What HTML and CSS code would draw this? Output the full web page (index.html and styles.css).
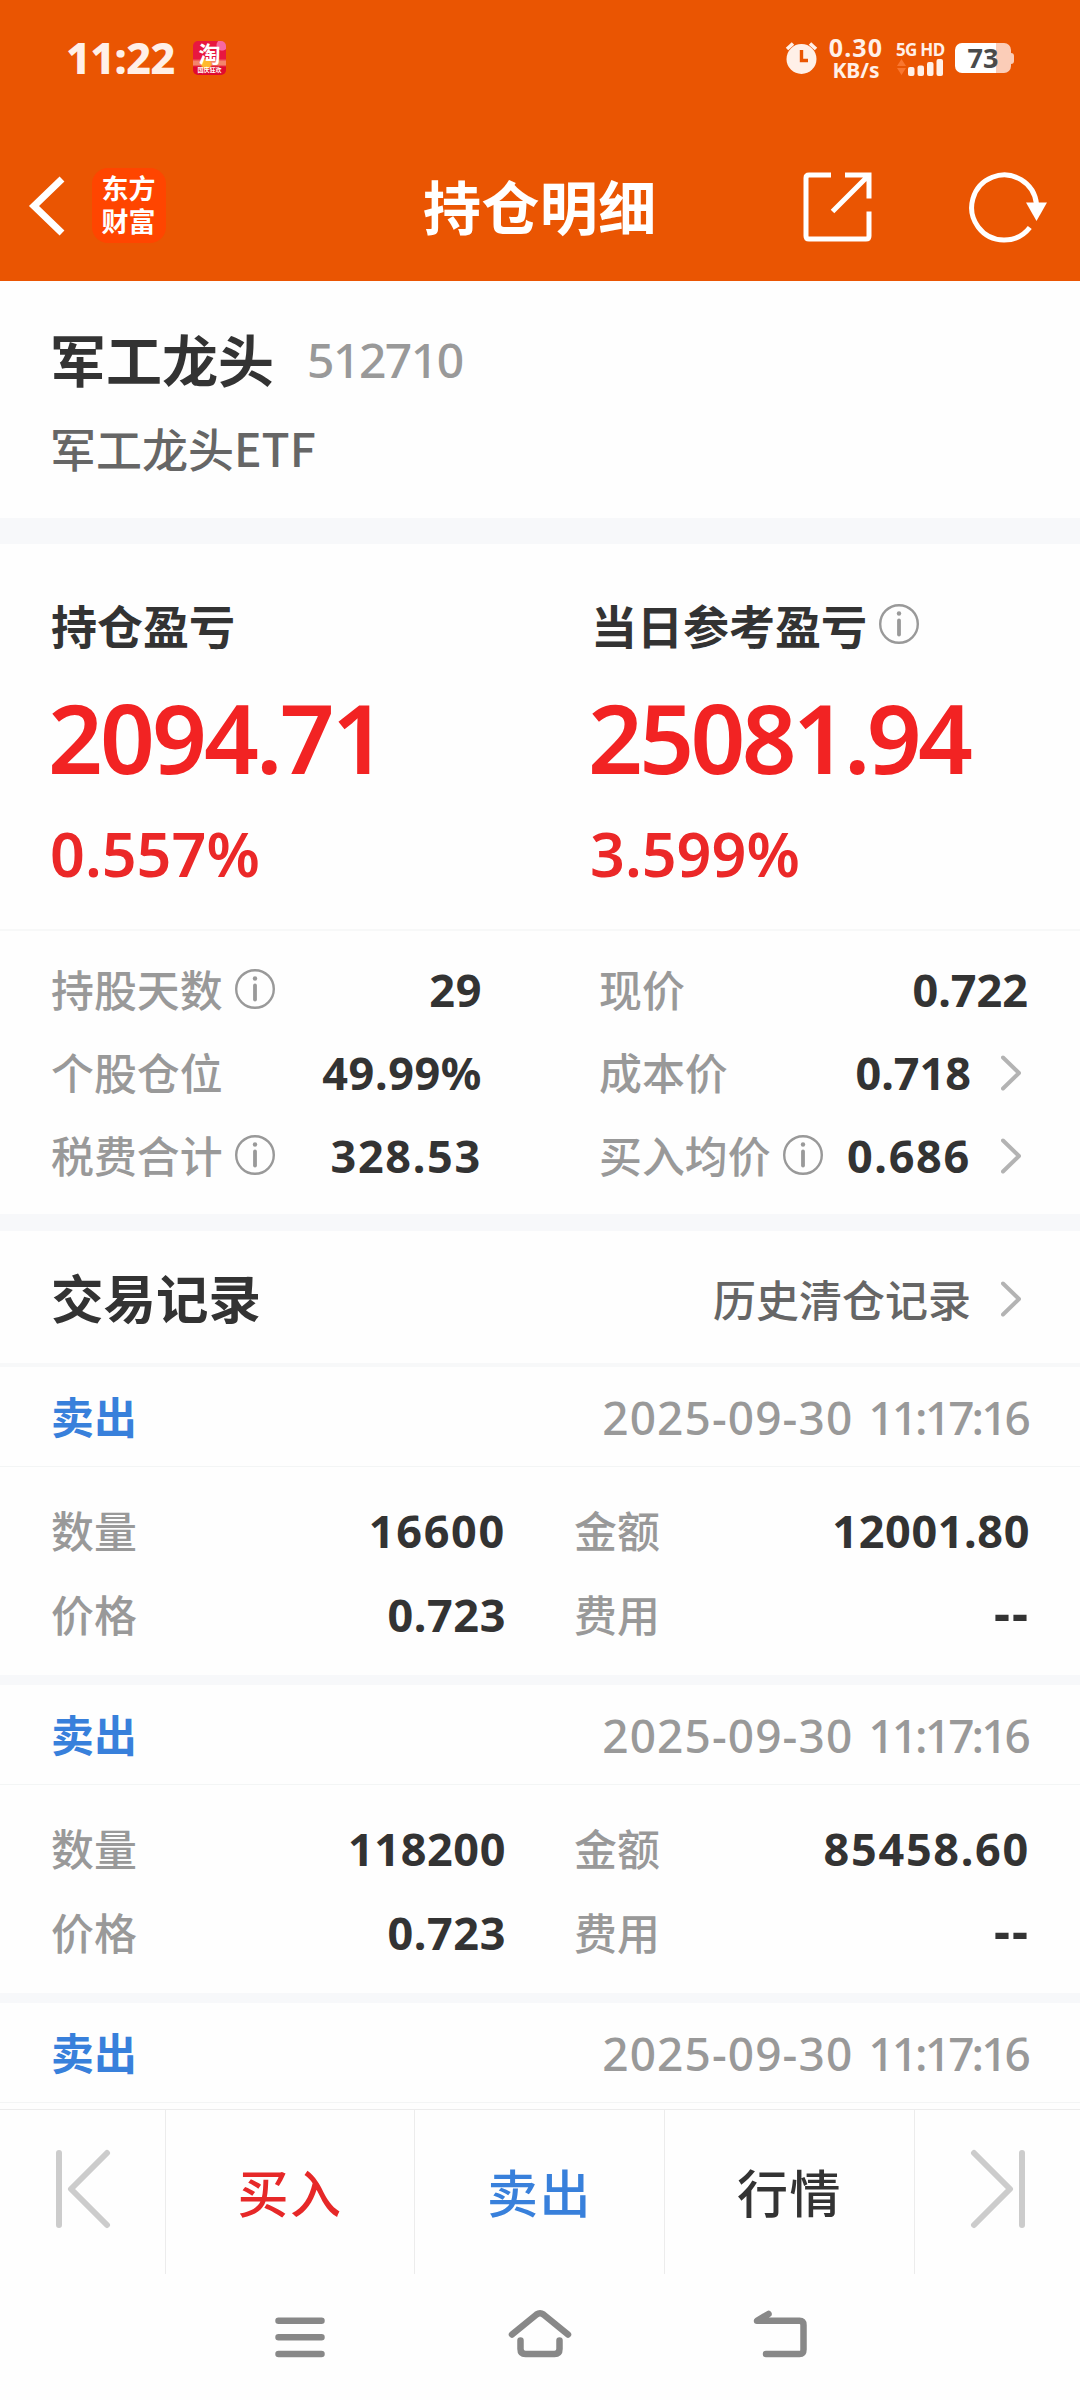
FILE: index.html
```html
<!DOCTYPE html>
<html lang="zh-CN">
<head>
<meta charset="utf-8">
<title>持仓明细</title>
<link rel="stylesheet" href="styles.css">
</head>
<body>
<svg class="defs" width="0" height="0" aria-hidden="true">
  <symbol id="info" viewBox="0 0 40 40"><circle cx="20" cy="20" r="18.8" fill="none" stroke="#999" stroke-width="2.4"/><circle cx="20" cy="9.5" r="2.2" fill="#999"/><path d="M20 16.5V30.5" stroke="#999" stroke-width="3.8" stroke-linecap="round"/></symbol>
  <symbol id="more" viewBox="0 0 20 36"><path d="M2 2.5L18 18L2 33.5" fill="none" stroke="#b3b3b3" stroke-width="4" stroke-linecap="round" stroke-linejoin="round"/></symbol>
</svg>
<div class="screen">
  <header class="header">
    <div class="status">
      <span class="clock">11:22</span>
      <span class="shop"><span class="shop-name">淘</span><span class="shop-tag">国庆狂欢</span></span>
      <svg class="alarm" width="34" height="34" viewBox="0 0 34 34"><circle cx="16.5" cy="18" r="15" fill="#fff0e8"/><path d="M2 8L8 2.5M25 2.5L31 8" stroke="#fff0e8" stroke-width="3.6"/><path d="M16.5 9V19.500H23" fill="none" stroke="#ea5502" stroke-width="3.4"/></svg>
      <div class="speed"><span class="rate">0.30</span><span class="unit">KB/s</span></div>
      <div class="net"><span class="net-type">5G HD</span>
        <svg width="48" height="18" viewBox="0 0 48 18"><path d="M1 8L5.500 1L10 8ZM1 10H10L5.500 17Z" fill="#f9762f"/><g fill="#fff0e8"><rect x="12" y="9" width="6.500" height="9" rx="2"/><rect x="21.500" y="7.500" width="6.500" height="10.500" rx="2"/><rect x="31" y="4" width="6.500" height="14" rx="2"/><rect x="40.500" y="1" width="6.500" height="17" rx="2"/></g></svg>
      </div>
      <div class="battery"><span class="cell">73</span><i class="nub"></i></div>
    </div>
    <div class="nav">
      <svg class="back" width="40" height="64" viewBox="0 0 40 64"><path d="M34 5L6 32L34 59" fill="none" stroke="#fff" stroke-width="7"/></svg>
      <span class="logo"><span>东方</span><span>财富</span></span>
      <h1 class="title">持仓明细</h1>
      <svg class="share" width="70" height="70" viewBox="0 0 70 70"><path d="M28 3H6Q3 3 3 6V64Q3 67 6 67H63Q66 67 66 64V39.500M42 3H66V26.500M64 5L29.500 39.500" fill="none" stroke="#fff" stroke-width="5"/></svg>
      <svg class="reload" width="80" height="74" viewBox="0 0 80 74"><path d="M60.800 58.500A32.500 32.500 0 1 1 67.500 35" fill="none" stroke="#fff" stroke-width="5"/><path d="M57 33.500H78L67.500 52Z" fill="#fff"/></svg>
    </div>
  </header>

  <section class="stock">
    <div class="stock-head"><h2 class="stock-name">军工龙头</h2><span class="stock-code">512710</span></div>
    <div class="stock-full">军工龙头ETF</div>
  </section>

  <section class="profit">
    <div class="profit-col">
      <h3 class="profit-title">持仓盈亏</h3>
      <div class="amount amount-short">2094.71</div>
      <div class="percent">0.557%</div>
    </div>
    <div class="profit-col">
      <h3 class="profit-title">当日参考盈亏<svg class="info" width="40" height="40"><use href="#info"/></svg></h3>
      <div class="amount">25081.94</div>
      <div class="percent">3.599%</div>
    </div>
  </section>

  <section class="stats">
    <div class="stats-col">
      <div class="stat"><span class="label">持股天数</span><svg class="info" width="40" height="40"><use href="#info"/></svg><span class="value">29</span></div>
      <div class="stat"><span class="label">个股仓位</span><span class="value">49.99%</span></div>
      <div class="stat"><span class="label">税费合计</span><svg class="info" width="40" height="40"><use href="#info"/></svg><span class="value wide">328.53</span></div>
    </div>
    <div class="stats-col">
      <div class="stat"><span class="label">现价</span><span class="value narrow">0.722</span></div>
      <div class="stat linked"><span class="label">成本价</span><span class="value narrow">0.718</span><svg class="more" width="20" height="36"><use href="#more"/></svg></div>
      <div class="stat linked"><span class="label">买入均价</span><svg class="info" width="40" height="40"><use href="#info"/></svg><span class="value wide">0.686</span><svg class="more" width="20" height="36"><use href="#more"/></svg></div>
    </div>
  </section>

  <section class="records">
    <div class="records-head"><h2 class="records-title">交易记录</h2><span class="history">历史清仓记录</span><svg class="more" width="20" height="36"><use href="#more"/></svg></div>
    <article class="record">
      <div class="record-head"><span class="side">卖出</span><time class="when"><span class="date">2025-09-30</span><span class="time">11:17:16</span></time></div>
      <div class="record-body">
        <span class="label">数量</span><span class="value wide">16600</span><span class="label second">金额</span><span class="value">12001.80</span>
        <span class="label">价格</span><span class="value">0.723</span><span class="label second">费用</span><span class="value dashes">--</span>
      </div>
    </article>
    <article class="record">
      <div class="record-head"><span class="side">卖出</span><time class="when"><span class="date">2025-09-30</span><span class="time">11:17:16</span></time></div>
      <div class="record-body">
        <span class="label">数量</span><span class="value">118200</span><span class="label second">金额</span><span class="value wide">85458.60</span>
        <span class="label">价格</span><span class="value">0.723</span><span class="label second">费用</span><span class="value dashes">--</span>
      </div>
    </article>
    <article class="record">
      <div class="record-head"><span class="side">卖出</span><time class="when"><span class="date">2025-09-30</span><span class="time">11:17:16</span></time></div>
    </article>
  </section>

  <footer class="actions">
    <span class="action step"><svg width="56" height="80" viewBox="0 0 56 80"><path d="M4 4V76M52 4L16 40L52 76" fill="none" stroke="#ccc" stroke-width="6" stroke-linecap="round" stroke-linejoin="round"/></svg></span>
    <span class="action buy">买入</span>
    <span class="action sell">卖出</span>
    <span class="action">行情</span>
    <span class="action step"><svg width="56" height="80" viewBox="0 0 56 80"><path d="M52 4V76M4 4L40 40L4 76" fill="none" stroke="#ccc" stroke-width="6" stroke-linecap="round" stroke-linejoin="round"/></svg></span>
  </footer>
  <nav class="system">
    <svg width="60" height="56" viewBox="0 0 60 56"><path d="M8.500 14.700H51.500M8.500 31.300H51.500M8.500 48H51.500" stroke="#888" stroke-width="6.500" stroke-linecap="round"/></svg>
    <svg width="70" height="56" viewBox="0 0 70 56"><path d="M7 28.500L31.500 8.500Q35 6 38.500 8.500L63 28.500M15.500 34.500V43Q15.500 48 20.500 48H49.500Q54.500 48 54.500 43V34.500" fill="none" stroke="#888" stroke-width="6.500" stroke-linecap="round"/></svg>
    <svg width="60" height="56" viewBox="0 0 60 56"><path d="M16 48H49.500Q53.500 48 53.500 43.500V19Q53.500 14.700 49.500 14.700H7L18.500 8" fill="none" stroke="#888" stroke-width="6.500" stroke-linecap="round" stroke-linejoin="round"/></svg>
  </nav>
</div>
</body>
</html>
```
FILE: styles.css
```css
* { box-sizing: border-box; margin: 0; padding: 0; }

body {
  background: #fefefe;
  color: #333;
  font-family: "Noto Sans CJK SC", sans-serif;
}

.defs { display: none; }
svg { flex: none; display: block; }
.screen { width: 1080px; height: 2400px; overflow: hidden; display: flex; flex-direction: column; }
.screen > * { flex: none; }

/* orange header */
.header { height: 281px; background: #ea5502; color: #fff; }
.status {
  height: 116px;
  padding-left: 66px;
  display: flex;
  align-items: center;
  color: #fff0e8;
  font-family: "Noto Sans", sans-serif;
  font-weight: 700;
}
.clock { width: 127px; font-size: 43px; line-height: 50px; letter-spacing: -0.6px; font-weight: 800; }
.shop {
  width: 33px;
  height: 34px;
  border-radius: 5px;
  background:
    radial-gradient(circle at 88% 12%, #f768a0 0 5px, transparent 6px),
    radial-gradient(circle at 40% 68%, #ffb92e 0 4px, transparent 6px),
    linear-gradient(#e8173f 0 52%, #f4856c 60% 70%, #e00a30 76%);
  color: #fff;
  font-family: "Noto Sans CJK SC", sans-serif;
  text-align: center;
}
.shop-name { display: block; height: 26px; font-size: 22px; line-height: 22px; }
.shop-tag { display: block; font-size: 6px; line-height: 6px; }
.alarm { margin-left: 559px; }
.speed { width: 56px; margin-left: 9px; text-align: center; }
.rate { display: block; font-size: 25px; line-height: 23px; letter-spacing: 1.2px; }
.unit { display: block; font-size: 21px; line-height: 22px; }
.net { width: 48px; margin-left: 12px; }
.net-type { display: block; font-size: 17px; line-height: 17px; letter-spacing: -0.7px; white-space: nowrap; }
.battery { margin-left: 11px; display: flex; align-items: center; }
.cell {
  width: 56px;
  height: 30px;
  border-radius: 7px;
  background: linear-gradient(90deg, #fff 73%, #fbcdb8 73%);
  color: #4a4a4a;
  font-size: 27px;
  line-height: 30px;
  text-align: center;
}
.nub { width: 3px; height: 11px; border-radius: 0 3px 3px 0; background: #fbcdb8; }

.nav { height: 165px; padding: 50px 31px 0 28px; display: flex; align-items: flex-start; }
.back { margin-top: 8px; }
.logo {
  width: 74px;
  height: 75px;
  margin: 2px 0 0 24px;
  padding: 3px 1px 0 0;
  border-radius: 16px;
  background: #ff4500;
  font-size: 27px;
  line-height: 33px;
  font-weight: 700;
  text-align: center;
}
.logo span { display: block; }
.title { margin: -1px 0 0 257px; font-size: 58px; line-height: 80px; font-weight: 700; letter-spacing: 0.4px; width: 237px; white-space: nowrap; }
.share { margin: 6px 0 0 143px; }
.reload { margin: 3px 0 0 auto; }

/* stock name */
.stock { height: 263px; padding: 36px 50px 0; border-bottom: 26px solid #f7f8fa; }
.stock-head { display: flex; align-items: center; height: 86px; }
.stock-name { width: 257px; padding-bottom: 5px; font-size: 56px; line-height: 80px; font-weight: 700; }
.stock-code { font: 500 48px/80px "Noto Sans", sans-serif; letter-spacing: -1.5px; color: #999; }
.stock-full { font-size: 46px; line-height: 88px; font-weight: 500; color: #666; }

/* profit and loss */
.profit { height: 387px; padding: 43px 0 0 51px; display: flex; border-bottom: 2px solid #f7f8f8; }
.profit-col { flex: none; width: 540px; }
.profit-title { display: flex; align-items: center; margin-top: -1px; padding-bottom: 1px; font-size: 46px; line-height: 76px; font-weight: 700; }
.profit-title .info { margin: 0 0 0 12px; }
.amount { margin-left: -3px; font: 600 96px/148px "Noto Sans", sans-serif; letter-spacing: -3.7px; color: #f22323; }
.amount-short { letter-spacing: -2.900px; }
.percent { margin-left: -1px; font: 600 61px/86px "Noto Sans", sans-serif; letter-spacing: 0; color: #eb2828; }

/* holding details */
.stats { height: 300px; padding: 17px 0 0 51px; display: flex; border-bottom: 17px solid #f7f8fa; }
.stats-col { flex: none; width: 431px; margin-right: 117px; }
.stat { display: flex; align-items: center; height: 83px; }
.label { padding-bottom: 2px; font-size: 42.900px; line-height: 81px; font-weight: 500; color: #999; }
.info { margin: -2px 0 0 12px; }
.value { margin-left: auto; padding-top: 1px; font: 700 45px/82px "Noto Sans", sans-serif; letter-spacing: 0.600px; }
.wide { letter-spacing: 1.700px; }
.narrow { letter-spacing: 0; }
.linked .more, .records-head .more { margin-left: 30px; }
.linked { margin-right: 7px; }
.stats-col + .stats-col { width: 429px; margin-right: 0; }

/* trade records */
.records { height: 878px; overflow: hidden; }
.records-head { height: 136px; padding: 0 59px 0 51px; display: flex; align-items: center; border-bottom: 4px solid #f7f8f9; }
.records-title { padding-bottom: 2px; font-size: 52.500px; line-height: 80px; font-weight: 700; }
.history { margin-left: auto; padding-top: 2px; font-size: 43px; line-height: 80px; font-weight: 500; color: #666; }
.records-head .more { margin-top: 3px; }
.record + .record { border-top: 10px solid #f7f8fa; }
.record-head { height: 100px; padding: 0 51px; display: flex; align-items: center; border-bottom: 1px solid #f3f5f5; }
.side { padding-bottom: 3px; font-size: 42.900px; line-height: 80px; font-weight: 700; color: #3880db; }
.when { margin-left: auto; padding-right: 1px; display: flex; gap: 15px; font: 500 46px/80px "Noto Sans", sans-serif; color: #999; }
.date { letter-spacing: 1.100px; }
.time { letter-spacing: -2.900px; }
.record-body { height: 208px; padding: 21px 51px 0; display: grid; grid-template-columns: 110px 345px 130px 394px; grid-auto-rows: 84px; align-items: center; }
.second { margin-left: 68px; white-space: nowrap; }
.dashes { padding: 0 0 5px; font-size: 50px; letter-spacing: 2px; }

/* bottom bar */
.actions { height: 165px; border-top: 1px solid #ececec; display: grid; grid-template-columns: 166px 249px 250px 250px 165px; }
.action { display: flex; align-items: center; justify-content: center; padding-bottom: 2px; font-size: 51px; letter-spacing: 1.500px; font-weight: 500; border-right: 1px solid #ececec; }
.step { padding-bottom: 6px; }
.action:last-child { border-right: 0; }
.buy { color: #e62828; }
.sell { color: #3880db; }
.system { height: 126px; padding: 32px 270px 0; display: flex; justify-content: space-between; }
```
